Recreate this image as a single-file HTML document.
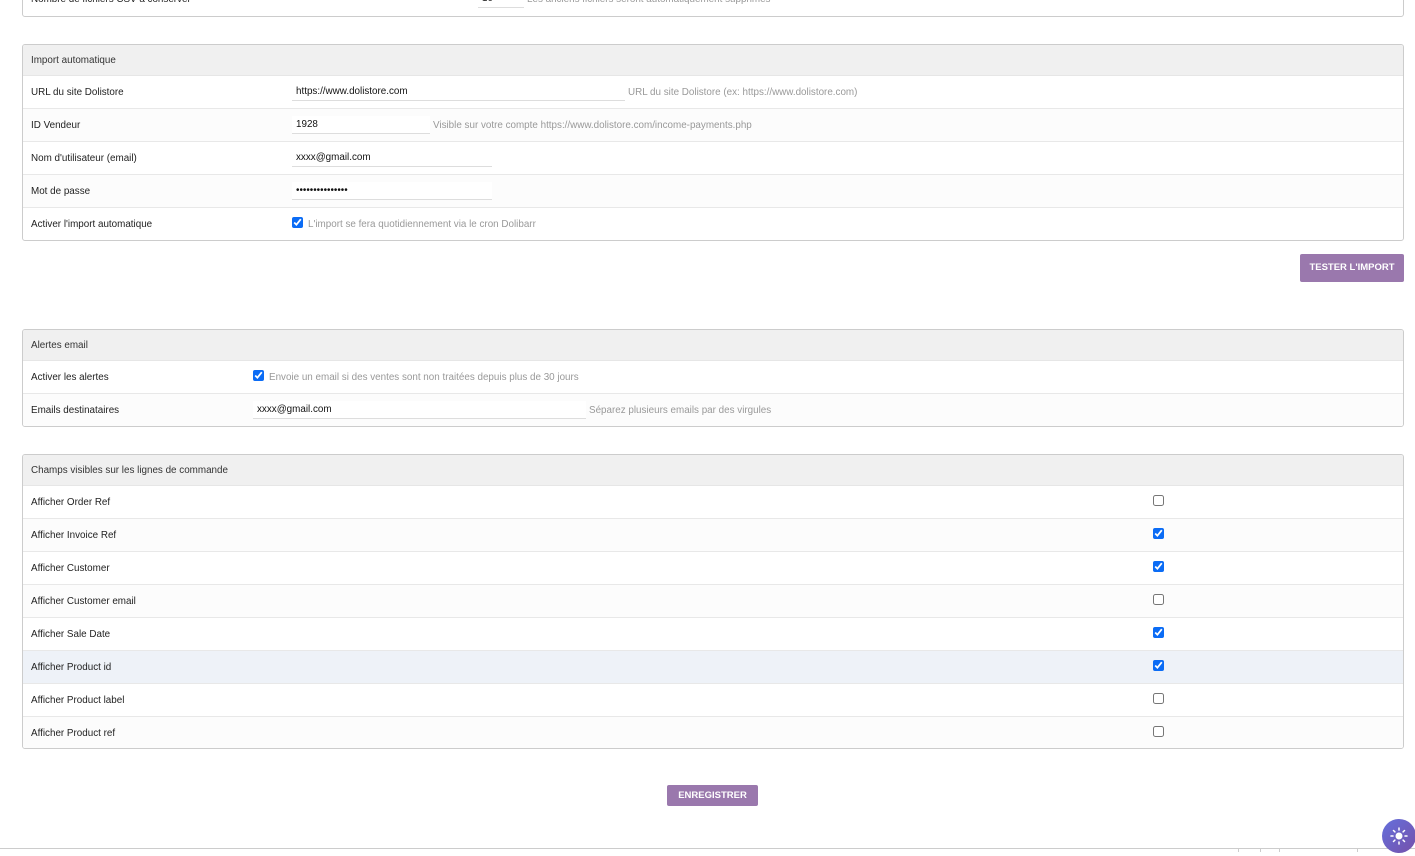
<!DOCTYPE html>
<html><head><meta charset="utf-8"><style>
*{box-sizing:border-box;margin:0;padding:0}
body{width:1415px;height:852px;overflow:hidden;background:#fff;font-family:"Liberation Sans",sans-serif;font-size:9.85px;color:#222;position:relative}
.box{position:absolute;left:22px;width:1382px;border:1px solid #ccc;border-radius:3px;overflow:hidden;background:#fff}
.hd{height:31px;background:#f0f0f0;padding-left:8px;line-height:31px;color:#333;border-bottom:1px solid #e6e6e6}
.row{height:33px;position:relative;border-bottom:1px solid #e8e8e8;line-height:33px;padding-left:8px}
.row:last-child{border-bottom:none}
.row.alt{background:#fcfcfc}
.row.hi{background:#eef2f8}
.in{position:absolute;top:7px;height:18px;border:none;border-bottom:1px solid #ddd;line-height:18px;padding-left:4px;color:#111;background:#fff}
.hint{position:absolute;top:0;color:#999}
input[type=checkbox]{position:absolute;width:11px;height:11px;margin:0;accent-color:#0b6cf5}
.btn{position:absolute;background:#9a78ad;color:#fff;font-weight:bold;font-size:9.5px;text-align:center;border-radius:2px}
.top{position:absolute;top:-6px}
</style></head><body>

<div class="box" style="top:-20px;height:37px"></div>
<span class="top" style="left:31px">Nombre de fichiers CSV à conserver</span>
<div style="position:absolute;left:478px;top:-10px;width:46px;height:18px;border-bottom:1px solid #ddd;padding-left:4px;line-height:18px">10</div>
<span class="top" style="left:527px;color:#999">Les anciens fichiers seront automatiquement supprimés</span>

<div class="box" style="top:44px;height:197px">
 <div class="hd">Import automatique</div>
 <div class="row">URL du site Dolistore<div class="in" style="left:269px;width:333px">https://www.dolistore.com</div><span class="hint" style="left:605px">URL du site Dolistore (ex: https://www.dolistore.com)</span></div>
 <div class="row alt">ID Vendeur<div class="in" style="left:269px;width:138px">1928</div><span class="hint" style="left:410px">Visible sur votre compte https://www.dolistore.com/income-payments.php</span></div>
 <div class="row">Nom d'utilisateur (email)<div class="in" style="left:269px;width:200px">xxxx@gmail.com</div></div>
 <div class="row alt">Mot de passe<div class="in" style="left:269px;width:200px">•••••••••••••••</div></div>
 <div class="row">Activer l'import automatique<input type="checkbox" checked style="left:269px;top:9px"><span class="hint" style="left:285px">L'import se fera quotidiennement via le cron Dolibarr</span></div>
</div>

<div class="btn" style="left:1300px;top:254px;width:104px;height:28px;line-height:28px">TESTER L'IMPORT</div>

<div class="box" style="top:329px;height:98px">
 <div class="hd">Alertes email</div>
 <div class="row">Activer les alertes<input type="checkbox" checked style="left:230px;top:9px"><span class="hint" style="left:246px">Envoie un email si des ventes sont non traitées depuis plus de 30 jours</span></div>
 <div class="row alt">Emails destinataires<div class="in" style="left:230px;width:333px">xxxx@gmail.com</div><span class="hint" style="left:566px">Séparez plusieurs emails par des virgules</span></div>
</div>

<div class="box" style="top:454px;height:295px">
 <div class="hd">Champs visibles sur les lignes de commande</div>
 <div class="row">Afficher Order Ref<input type="checkbox" style="left:1130px;top:9px"></div>
 <div class="row alt">Afficher Invoice Ref<input type="checkbox" checked style="left:1130px;top:9px"></div>
 <div class="row">Afficher Customer<input type="checkbox" checked style="left:1130px;top:9px"></div>
 <div class="row alt">Afficher Customer email<input type="checkbox" style="left:1130px;top:9px"></div>
 <div class="row">Afficher Sale Date<input type="checkbox" checked style="left:1130px;top:9px"></div>
 <div class="row hi">Afficher Product id<input type="checkbox" checked style="left:1130px;top:9px"></div>
 <div class="row">Afficher Product label<input type="checkbox" style="left:1130px;top:9px"></div>
 <div class="row alt">Afficher Product ref<input type="checkbox" style="left:1130px;top:9px"></div>
</div>

<div class="btn" style="left:667px;top:785px;width:91px;height:21px;line-height:21px">ENREGISTRER</div>

<div style="position:absolute;left:0;top:848px;width:1415px;height:1px;background:#ccc"></div>
<div style="position:absolute;left:1238px;top:848px;width:1px;height:4px;background:#ccc"></div>
<div style="position:absolute;left:1260px;top:848px;width:1px;height:4px;background:#ccc"></div>
<div style="position:absolute;left:1279px;top:848px;width:1px;height:4px;background:#ccc"></div>
<div style="position:absolute;left:1357px;top:848px;width:1px;height:4px;background:#ccc"></div>
<div style="position:absolute;left:1396px;top:848px;width:1px;height:4px;background:#ccc"></div>

<div style="position:absolute;left:1382px;top:819px;width:34px;height:34px;border-radius:50%;background:linear-gradient(135deg,#6470dc,#7650aa)">
<svg width="34" height="34" viewBox="0 0 34 34"><circle cx="17" cy="17" r="3.5" fill="#fff"/><g stroke="#fff" stroke-width="1.5" stroke-linecap="round"><path d="M17 9v2M17 23v2M9 17h2M23 17h2M11.5 11.5l1.4 1.4M21.1 21.1l1.4 1.4M11.5 22.5l1.4-1.4M21.1 12.9l1.4-1.4"/></g></svg>
</div>
</body></html>
